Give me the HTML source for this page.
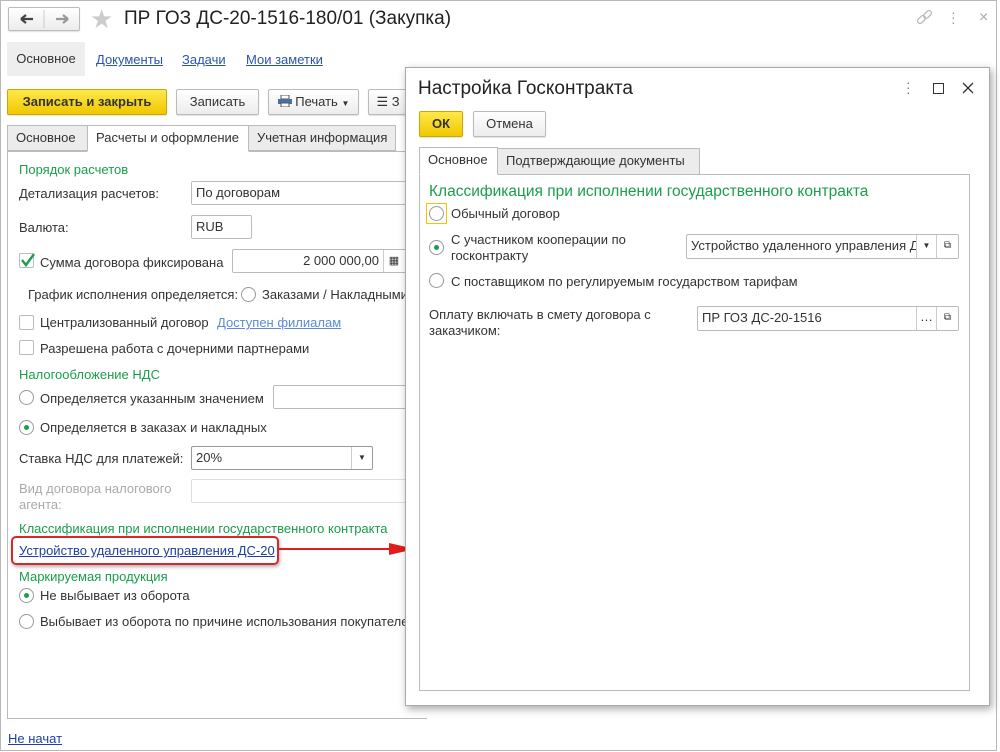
<!DOCTYPE html>
<html><head><meta charset="utf-8"><style>
*{box-sizing:border-box;margin:0;padding:0}
body{width:1000px;height:752px;background:#fff;font-family:"Liberation Sans",Arial,sans-serif;font-size:13px;color:#333;position:relative;overflow:hidden}
.a{position:absolute;white-space:nowrap}
.g{color:#1a9e4a}
.lnk{color:#2a55a8;text-decoration:underline}
.btn{position:absolute;border:1px solid #bbb;border-radius:2px;background:linear-gradient(#fff,#ececec);text-align:center;line-height:24px;box-shadow:0 1px 1px rgba(0,0,0,.12);white-space:nowrap}
.yb{background:linear-gradient(#ffe84a,#f0c800);border-color:#c9a800;font-weight:bold;color:#333}
.inp{position:absolute;border:1px solid #bbb;border-radius:2px;background:#fff;height:24px;line-height:22px;padding-left:4px;white-space:nowrap;overflow:hidden}
.rad{position:absolute;width:15px;height:15px;border:1px solid #999;border-radius:50%;background:#fff}
.rad.on::after{content:"";position:absolute;left:4px;top:4px;width:5px;height:5px;border-radius:50%;background:#1a9e4a}
.chk{position:absolute;width:15px;height:15px;border:1px solid #bbb;border-radius:2px;background:#fff}
.tab{position:absolute;border:1px solid #bbb;background:#ececec;height:26px;line-height:24px;padding:0 8px;white-space:nowrap}
</style></head><body>
<div class="a" style="left:0;top:0;width:997px;height:751px;border:1px solid #b8b8b8"></div>
<div class="btn" style="left:8px;top:7px;width:72px;height:24px;padding:0">
<svg width="70" height="22" style="position:absolute;left:0;top:0"><line x1="35" y1="2" x2="35" y2="20" stroke="#ccc"/>
<path d="M12 11h12M12 11l5-4M12 11l5 4" stroke="#444" stroke-width="2.2" fill="none"/>
<path d="M47 11h12M59 11l-5-4M59 11l-5 4" stroke="#999" stroke-width="2.2" fill="none"/></svg></div>
<div class="a" style="left:90px;top:4px;font-size:26px;color:#ccc">★</div>
<div class="a" style="left:124px;top:8px;font-size:19px;color:#222">ПР ГОЗ ДС-20-1516-180/01 (Закупка)</div>
<svg class="a" style="left:916px;top:9px" width="18" height="18"><g fill="none" stroke="#bbb" stroke-width="1.3"><rect x="1" y="8" width="9" height="5" rx="2.5" transform="rotate(-45 5.5 10.5)"/><rect x="7" y="3" width="9" height="5" rx="2.5" transform="rotate(-45 11.5 5.5)"/></g></svg>
<div class="a" style="left:951px;top:10px;font-size:14px;color:#999;line-height:5px">·<br>·<br>·</div>
<div class="a" style="left:979px;top:9px;font-size:16px;color:#aaa">×</div>
<div class="a" style="left:7px;top:42px;width:78px;height:34px;background:#eee;border-radius:2px;line-height:34px;text-align:center">Основное</div>
<div class="a lnk" style="left:96px;top:52px">Документы</div>
<div class="a lnk" style="left:182px;top:52px">Задачи</div>
<div class="a lnk" style="left:246px;top:52px">Мои заметки</div>
<div class="btn yb" style="left:7px;top:89px;width:160px;height:26px">Записать и закрыть</div>
<div class="btn" style="left:176px;top:89px;width:83px;height:26px">Записать</div>
<div class="btn" style="left:268px;top:89px;width:91px;height:26px"><svg width="14" height="12" style="vertical-align:-1px"><rect x="3" y="0" width="8" height="4" fill="#fff" stroke="#555"/><rect x="0" y="4" width="14" height="5" fill="#4a6fa5"/><rect x="3" y="8" width="8" height="4" fill="#fff" stroke="#555"/></svg> Печать <span style="font-size:8px">▼</span></div>
<div class="btn" style="left:368px;top:89px;width:40px;height:26px">☰ З</div>
<div class="tab" style="left:7px;top:125px;width:81px">Основное</div>
<div class="tab" style="left:248px;top:125px;width:148px">Учетная информация</div>
<div class="a" style="left:7px;top:151px;width:420px;height:568px;border:1px solid #bbb;border-right:none"></div>
<div class="tab" style="left:87px;top:125px;width:162px;background:#fff;border-bottom-color:#fff;height:27px">Расчеты и оформление</div>
<div class="a g" style="left:19px;top:162px">Порядок расчетов</div>
<div class="a" style="left:19px;top:186px">Детализация расчетов:</div>
<div class="inp" style="left:191px;top:181px;width:230px">По договорам</div>
<div class="a" style="left:19px;top:220px">Валюта:</div>
<div class="inp" style="left:191px;top:215px;width:61px">RUB</div>
<div class="chk" style="left:19px;top:253px"></div>
<svg class="a" style="left:20px;top:252px" width="16" height="16"><path d="M2 8l4 5 8-11" stroke="#1a9e4a" stroke-width="2.4" fill="none"/></svg>
<div class="a" style="left:40px;top:255px">Сумма договора фиксирована</div>
<div class="inp" style="left:232px;top:249px;width:190px;text-align:right;padding-right:42px">2 000 000,00</div>
<div class="a" style="left:383px;top:250px;height:22px;border-left:1px solid #ccc;width:21px;text-align:center;line-height:22px;font-size:11px;background:#fff">▦</div>
<div class="a" style="left:28px;top:287px">График исполнения определяется:</div>
<div class="rad" style="left:241px;top:287px"></div>
<div class="a" style="left:262px;top:287px">Заказами / Накладными</div>
<div class="chk" style="left:19px;top:315px"></div>
<div class="a" style="left:40px;top:315px">Централизованный договор</div>
<div class="a lnk" style="left:217px;top:315px;color:#5b8ad6">Доступен филиалам</div>
<div class="chk" style="left:19px;top:340px"></div>
<div class="a" style="left:40px;top:341px">Разрешена работа с дочерними партнерами</div>
<div class="a g" style="left:19px;top:367px">Налогообложение НДС</div>
<div class="rad" style="left:19px;top:390px"></div>
<div class="a" style="left:40px;top:391px">Определяется указанным значением</div>
<div class="inp" style="left:273px;top:385px;width:150px"></div>
<div class="rad on" style="left:19px;top:420px"></div>
<div class="a" style="left:40px;top:420px">Определяется в заказах и накладных</div>
<div class="a" style="left:19px;top:451px">Ставка НДС для платежей:</div>
<div class="inp" style="left:191px;top:446px;width:182px;border-color:#999">20%</div>
<div class="a" style="left:351px;top:447px;width:21px;height:22px;border-left:1px solid #ccc;text-align:center;font-size:8px;line-height:22px">▼</div>
<div class="a" style="left:19px;top:481px;color:#aaa;line-height:16px">Вид договора налогового<br>агента:</div>
<div class="inp" style="left:191px;top:479px;width:232px;border-color:#ddd"></div>
<div class="a g" style="left:19px;top:521px">Классификация при исполнении государственного контракта</div>
<div class="a" style="left:11px;top:536px;width:268px;height:29px;border:2px solid #d9262a;border-radius:5px;box-shadow:1px 2px 3px rgba(0,0,0,.3)"></div>
<div class="a lnk" style="left:19px;top:543px;color:#1f3fa0">Устройство удаленного управления ДС-20</div>
<div class="a" style="left:279px;top:548px;width:112px;height:2px;background:#e21b1b"></div>
<div class="a" style="left:389px;top:543px;width:0;height:0;border-left:26px solid #e21b1b;border-top:6px solid transparent;border-bottom:6px solid transparent"></div>
<div class="a g" style="left:19px;top:569px">Маркируемая продукция</div>
<div class="rad on" style="left:19px;top:588px"></div>
<div class="a" style="left:40px;top:588px">Не выбывает из оборота</div>
<div class="rad" style="left:19px;top:614px"></div>
<div class="a" style="left:40px;top:614px">Выбывает из оборота по причине использования покупателем</div>
<div class="a lnk" style="left:8px;top:731px;color:#1f3fa0">Не начат</div>
<div class="a" style="left:405px;top:67px;width:585px;height:639px;background:#fff;border:1px solid #aaa;box-shadow:2px 3px 8px rgba(0,0,0,.35)"></div>
<div class="a" style="left:418px;top:78px;font-size:19px;color:#222">Настройка Госконтракта</div>
<div class="a" style="left:906px;top:80px;font-size:14px;color:#777;line-height:5px">·<br>·<br>·</div>
<div class="a" style="left:933px;top:83px;width:11px;height:11px;border:1.5px solid #333"></div>
<svg class="a" style="left:962px;top:82px" width="12" height="12"><path d="M1 1l10 10M11 1L1 11" stroke="#333" stroke-width="1.3"/></svg>
<div class="btn yb" style="left:419px;top:111px;width:44px;height:26px">ОК</div>
<div class="btn" style="left:473px;top:111px;width:73px;height:26px;font-weight:normal">Отмена</div>
<div class="a" style="left:419px;top:174px;width:551px;height:517px;border:1px solid #bbb"></div>
<div class="tab" style="left:497px;top:148px;width:203px;height:27px">Подтверждающие документы</div>
<div class="tab" style="left:419px;top:147px;width:79px;background:#fff;border-bottom-color:#fff;height:28px">Основное</div>
<div class="a g" style="left:429px;top:183px;font-size:15.5px">Классификация при исполнении государственного контракта</div>
<div class="a" style="left:426px;top:203px;width:21px;height:21px;border:1px solid #f0c800"></div>
<div class="rad" style="left:429px;top:206px"></div>
<div class="a" style="left:451px;top:206px">Обычный договор</div>
<div class="rad on" style="left:429px;top:240px"></div>
<div class="a" style="left:451px;top:232px;line-height:16px">С участником кооперации по<br>госконтракту</div>
<div class="inp" style="left:686px;top:234px;width:273px;height:25px">Устройство удаленного управления Д</div>
<div class="a" style="left:916px;top:235px;width:20px;height:23px;border-left:1px solid #ccc;background:#fff;text-align:center;font-size:8px;line-height:22px">▼</div>
<div class="a" style="left:936px;top:235px;width:22px;height:23px;border-left:1px solid #ccc;background:#fff;text-align:center;font-size:10px;line-height:22px">⧉</div>
<div class="rad" style="left:429px;top:273px"></div>
<div class="a" style="left:451px;top:274px">С поставщиком по регулируемым государством тарифам</div>
<div class="a" style="left:429px;top:307px;line-height:16px">Оплату включать в смету договора с<br>заказчиком:</div>
<div class="inp" style="left:697px;top:306px;width:262px;height:25px">ПР ГОЗ ДС-20-1516</div>
<div class="a" style="left:916px;top:307px;width:20px;height:23px;border-left:1px solid #ccc;background:#fff;text-align:center;line-height:20px">…</div>
<div class="a" style="left:936px;top:307px;width:22px;height:23px;border-left:1px solid #ccc;background:#fff;text-align:center;font-size:10px;line-height:22px">⧉</div>
</body></html>
